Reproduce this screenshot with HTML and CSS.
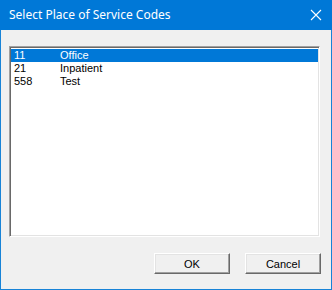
FILE: index.html
```html
<!DOCTYPE html>
<html>
<head>
<meta charset="utf-8">
<link rel="stylesheet" href="styles.css">
</head>
<body>
<div class="window">
  <div class="titlebar">
    <span class="title">Select Place of Service Codes</span>
    <svg class="close" width="12" height="12" viewBox="0 0 12 12"><path d="M1 1 L11 11 M11 1 L1 11" stroke="#fff" stroke-width="1.1" fill="none"/></svg>
  </div>
  <div class="client">
    <div class="listbox">
      <div class="row selected"><span class="code">11</span><span class="name">Office</span></div>
      <div class="row"><span class="code">21</span><span class="name">Inpatient</span></div>
      <div class="row"><span class="code">558</span><span class="name">Test</span></div>
    </div>
    <div class="buttons">
      <div class="btn">OK</div>
      <div class="btn">Cancel</div>
    </div>
  </div>
</div>
</body>
</html>
```
FILE: styles.css
```css
html, body { margin: 0; padding: 0; }
body { width: 332px; height: 290px; overflow: hidden; }
.window {
  width: 332px; height: 290px; box-sizing: border-box;
  border: 1px solid #1883d7; border-top: none;
  background: #f0f0f0;
  display: flex; flex-direction: column;
}
.titlebar {
  height: 30px; background: #0078d7; margin: 0 -1px;
  display: flex; align-items: center; justify-content: space-between;
  padding: 0 10px 0 9px;
}
.title { color: #fff; font-family: "Noto Sans", sans-serif; font-size: 12px; position: relative; top: -1px; }
.client { flex: 1; display: flex; flex-direction: column; padding: 16px 11px 0 8px; }
.listbox {
  height: 191px; box-sizing: border-box; background: #fff;
  border-style: solid; border-width: 1px;
  border-color: #a0a0a0 #fff #fff #a0a0a0;
  box-shadow: inset 1px 1px 0 #696969, inset -1px -1px 0 #e3e3e3;
  padding: 2px 1px 0 1px;
  font-family: "Liberation Sans", Arial, sans-serif; font-size: 11px;
}
.row { height: 13px; line-height: 13px; display: flex; color: #000; }
.row.selected { background: #0078d7; color: #fff; }
.code { width: 46px; padding-left: 3px; }
.buttons { display: flex; justify-content: flex-end; gap: 15px; margin-top: 16px; margin-right: -1px; }
.btn {
  width: 76px; height: 21px; box-sizing: border-box;
  border: 1px solid; border-color: #fff #696969 #696969 #fff;
  box-shadow: inset -1px -1px 0 #a0a0a0, inset 1px 1px 0 #e3e3e3;
  background: #f0f0f0;
  font-family: "Liberation Sans", Arial, sans-serif; font-size: 11px;
  display: flex; align-items: center; justify-content: center; color: #000;
}
```
